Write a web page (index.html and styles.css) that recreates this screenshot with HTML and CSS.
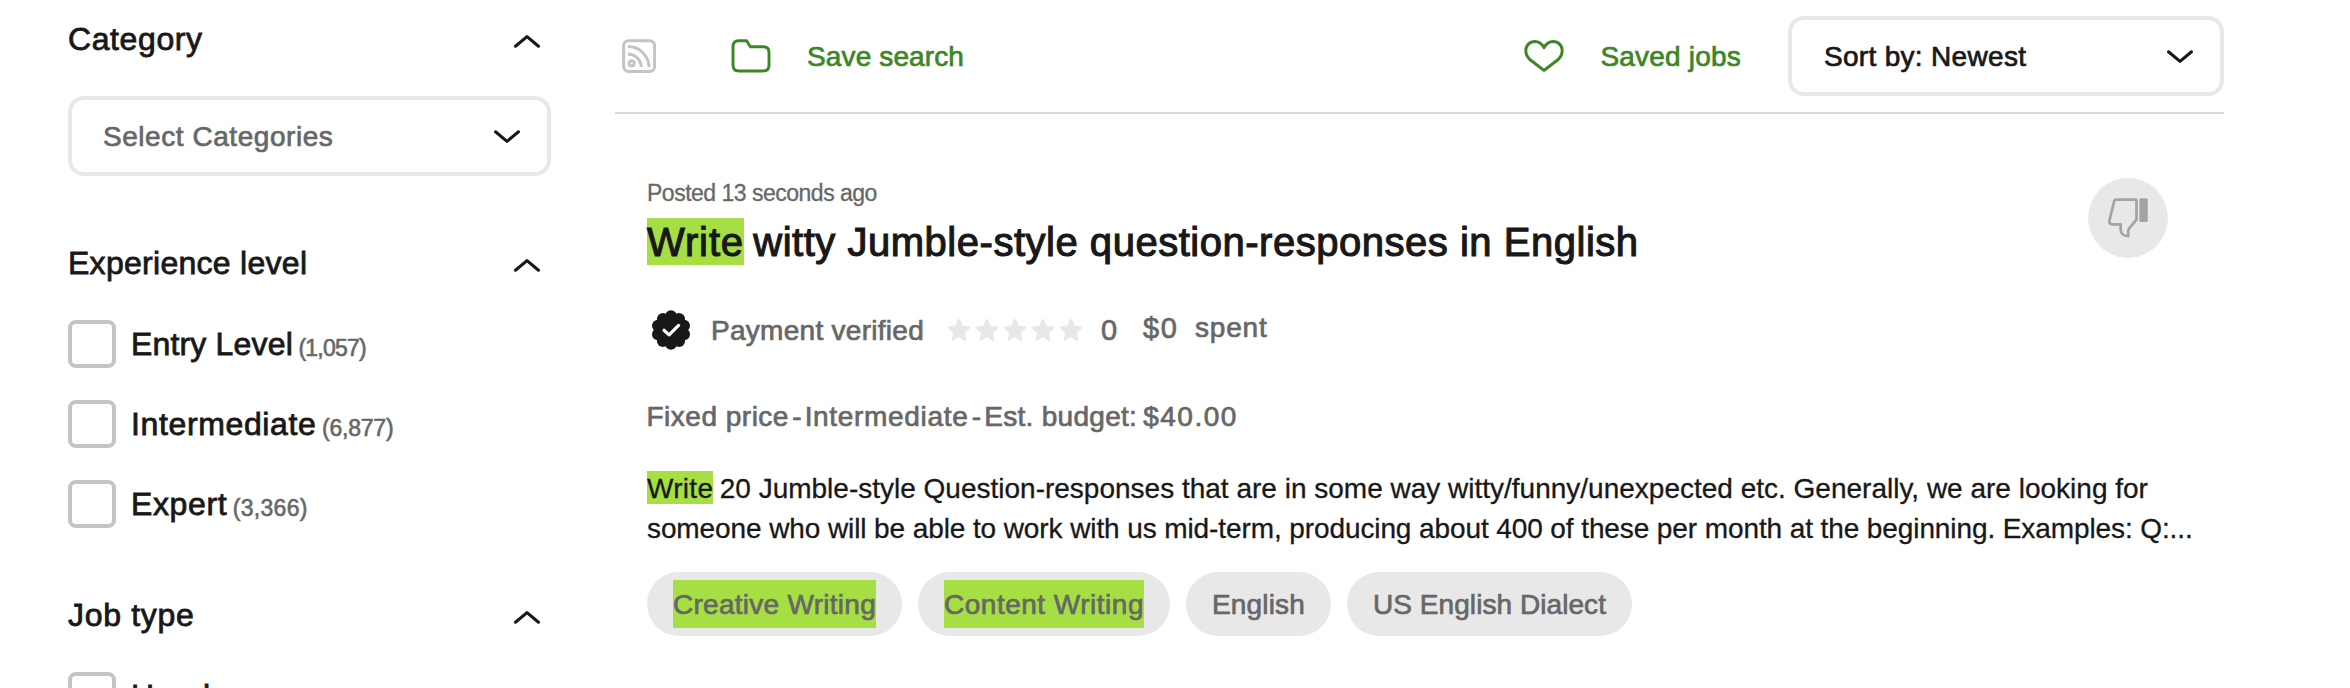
FILE: index.html
```
<!DOCTYPE html>
<html lang="en">
<head>
<meta charset="utf-8">
<title>Job search</title>
<link rel="stylesheet" href="styles.css">
</head>
<body>
<svg class="defs" aria-hidden="true">
  <symbol id="chevron" viewBox="0 0 28 16"><path d="M2.5 2.8 14 12.4 25.5 2.8" fill="none" stroke="#181818" stroke-width="3.1" stroke-linecap="round" stroke-linejoin="round"/></symbol>
  <symbol id="star" viewBox="0 0 24 24"><path d="M12 1.8 15 8.6 22.4 9.4 16.9 14.4 18.4 22 12 18.2 5.6 22 7.1 14.4 1.6 9.4 9 8.6Z" fill="#e8e8e8" stroke="#e8e8e8" stroke-width="2" stroke-linejoin="round"/></symbol>
</svg>
<div class="page">
  <aside class="sidebar">
    <h2 class="heading"><span class="t-category">Category</span><svg class="chevron up"><use href="#chevron"/></svg></h2>
    <div class="select select-category"><span>Select Categories</span><svg class="chevron"><use href="#chevron"/></svg></div>

    <h2 class="heading heading-next"><span class="t-experience">Experience level</span><svg class="chevron up"><use href="#chevron"/></svg></h2>
    <ul class="options">
      <li class="option"><span class="checkbox"></span><span class="label t-entry">Entry Level</span><span class="count t-count-entry">(1,057)</span></li>
      <li class="option"><span class="checkbox"></span><span class="label">Intermediate</span><span class="count t-count-inter">(6,877)</span></li>
      <li class="option"><span class="checkbox"></span><span class="label">Expert</span><span class="count t-count-expert">(3,366)</span></li>
    </ul>

    <h2 class="heading heading-next"><span class="t-jobtype">Job type</span><svg class="chevron up"><use href="#chevron"/></svg></h2>
    <ul class="options">
      <li class="option"><span class="checkbox"></span><span class="label">Hourly</span></li>
    </ul>
  </aside>

  <main class="main">
    <div class="toolbar">
      <svg class="rss" width="34" height="34" viewBox="0 0 34 34" fill="none" stroke="#c4c4c4" stroke-width="3">
        <rect x="1.6" y="1.7" width="31" height="30.8" rx="5"/>
        <path d="M6 7.5A21 21 0 0 1 27 28M6 15.3A13 13 0 0 1 19.2 28"/>
        <circle cx="9.7" cy="24.3" r="2.6"/>
      </svg>
      <a class="link save">
        <svg width="40" height="34" viewBox="0 0 40 34" fill="none" stroke="#3c8625" stroke-width="2.9" stroke-linejoin="round">
          <path d="M7.5 1.8H15.6L19.3 7.7H32.3Q38 7.7 38 13.3V26.2Q38 32 32 32H8Q2 32 2 26V8Q2 1.8 7.5 1.8Z"/>
        </svg>
        <span class="t-save">Save search</span>
      </a>
      <a class="link saved">
        <svg width="40" height="34" viewBox="0 0 40 34" fill="none" stroke="#3c8625" stroke-width="3" stroke-linejoin="round">
          <path d="M20 8.6C17.6 4.3 14.4 2.5 10.9 2.5C5.6 2.5 1.8 6.5 1.8 11.8C1.8 15.6 3.4 18.2 5.8 20.5L20 31.4L34.2 20.5C36.6 18.2 38.2 15.6 38.2 11.8C38.2 6.5 34.4 2.5 29.1 2.5C25.6 2.5 22.4 4.3 20 8.6Z"/>
        </svg>
        <span class="t-saved">Saved jobs</span>
      </a>
      <div class="select select-sort"><span>Sort by: Newest</span><svg class="chevron"><use href="#chevron"/></svg></div>
    </div>

    <article class="job">
      <header class="job-head">
        <div>
          <div class="posted">Posted 13 seconds ago</div>
          <h1 class="title"><mark>Write</mark> witty Jumble-style question-responses in English</h1>
        </div>
        <button class="dislike" aria-label="Not interested">
          <svg width="40" height="40" viewBox="0 0 40 40" fill="none" stroke="#a3a3a3" stroke-width="2.7" stroke-linejoin="round">
            <path d="M8 1.6H27.5Q28.5 1.6 28.5 2.6V21.6L21 30.5Q20.2 31.5 20.2 33V38.1C15.8 38.1 12.7 35.6 12.7 31.5V26.3H4.2Q.9 26.2 1.4 22.8L6.2 3Q6.6 1.6 8 1.6Z"/>
            <rect x="31.4" y=".2" width="8.4" height="23.8" rx="1.5" fill="#a3a3a3" stroke="none"/>
          </svg>
        </button>
      </header>

      <div class="client">
        <svg class="badge" width="40" height="40" viewBox="-20 -20 40 40">
          <g fill="#181818">
            <circle r="16.8"/>
            <circle cx="0" cy="-13.7" r="6"/><circle cx="8.05" cy="-11.1" r="6"/><circle cx="13" cy="-4.25" r="6"/>
            <circle cx="13" cy="4.25" r="6"/><circle cx="8.05" cy="11.1" r="6"/><circle cx="0" cy="13.7" r="6"/>
            <circle cx="-8.05" cy="11.1" r="6"/><circle cx="-13" cy="4.25" r="6"/><circle cx="-13" cy="-4.25" r="6"/>
            <circle cx="-8.05" cy="-11.1" r="6"/>
          </g>
          <path d="M-7 .3-1.9 4.9 7.6-4.6" fill="none" stroke="#fff" stroke-width="3.2" stroke-linecap="round" stroke-linejoin="round"/>
        </svg>
        <span class="verified">Payment verified</span>
        <span class="stars">
          <svg><use href="#star"/></svg><svg><use href="#star"/></svg><svg><use href="#star"/></svg><svg><use href="#star"/></svg><svg><use href="#star"/></svg>
        </span>
        <span class="rating">0</span>
        <span class="spent"><span class="amount">$0</span><span class="spent-label">spent</span></span>
      </div>

      <div class="terms"><span class="t-fixed">Fixed price</span><span class="dash">-</span><span class="t-level">Intermediate</span><span class="dash">-</span><span class="t-est">Est. budget:</span><span class="t-budget">$40.00</span></div>

      <p class="description"><mark>Write</mark> 20 Jumble-style Question-responses that are in some way witty/funny/unexpected etc. Generally, we are looking for<br><span class="t-second">someone who will be able to work with us mid-term, producing about 400 of these per month at the beginning. Examples: Q:...</span></p>

      <div class="tags">
        <span class="tag t-creative"><mark>Creative Writing</mark></span>
        <span class="tag t-content"><mark>Content Writing</mark></span>
        <span class="tag t-english">English</span>
        <span class="tag t-dialect">US English Dialect</span>
      </div>
    </article>
  </main>
</div>
</body>
</html>
```
FILE: styles.css
```
* { box-sizing: border-box; }
html, body { margin: 0; overflow: hidden; }
body {
  background: #fff;
  color: #181818;
  font-family: "Liberation Sans", Arial, sans-serif;
  font-size: 28px;
  line-height: 40px;
}
svg { display: block; flex: none; }
h1, h2, p, ul { margin: 0; padding: 0; font-weight: 400; list-style: none; }
mark { background: #a5df43; color: inherit; }
span { white-space: nowrap; }
.defs { display: none; }

.page { display: flex; width: 2350px; height: 688px; overflow: hidden; }

/* Filters */
.sidebar { flex: none; width: 615px; padding: 15px 0 0 68px; }
.heading {
  display: flex; justify-content: space-between; align-items: center;
  width: 483px; height: 48px; padding-right: 10px;
  font-size: 32px; line-height: 48px;
  -webkit-text-stroke: .8px;
}
.heading-next { margin-top: 63px; }
.chevron { width: 28px; height: 16px; }
.chevron.up { margin-top: 4px; transform: scaleY(-1); }

.select {
  display: flex; justify-content: space-between; align-items: center;
  height: 80px; padding: 0 26px 0 31px;
  border: 4px solid #e8e8e8; border-radius: 16px;
  -webkit-text-stroke: .7px;
}
.select span { padding-top: 1px; }
.select .chevron { margin-top: 2px; }
.select-category { width: 483px; margin-top: 33px; color: #676767; letter-spacing: .55px; }
.select-sort { width: 436px; padding: 0 26px 0 32px; margin-left: 47px; letter-spacing: .31px; }

.options { display: grid; gap: 32px; margin-top: 33px; }
.option { display: flex; align-items: center; height: 48px; line-height: 48px; }
.checkbox { flex: none; width: 48px; height: 48px; margin-right: 15px; border: 4px solid #c4c4c4; border-radius: 8px; }
.label { font-size: 32px; letter-spacing: .63px; -webkit-text-stroke: .8px; }
.count { margin: 7px 0 0 5.5px; font-size: 23px; color: #676767; -webkit-text-stroke: .6px; }

/* Results toolbar */
.main { flex: none; width: 1609px; }
.toolbar { display: flex; align-items: center; height: 114px; padding-left: 7px; border-bottom: 2px solid #d9d9d9; }
.link { display: flex; align-items: center; gap: 36px; color: #3c8625; -webkit-text-stroke: .7px; }
.link span { padding-top: 1px; }
.save { margin-left: 75px; }
.saved { margin-left: auto; }

/* Job card */
.job { padding: 63px 0 0 32px; }
.job-head { display: flex; justify-content: space-between; align-items: flex-start; padding-right: 56px; }
.posted { font-size: 23px; line-height: 32px; letter-spacing: -.5px; color: #676767; -webkit-text-stroke: .3px; }
.title { margin-top: 5px; font-size: 40px; line-height: 56px; letter-spacing: .52px; -webkit-text-stroke: 1.1px; white-space: nowrap; }
.title mark { padding: 2px 0 1px; margin-right: -2.4px; letter-spacing: .88px; }
.dislike {
  display: grid; place-items: center; flex: none;
  width: 80px; height: 80px; margin-top: 1px; padding: 0;
  border: 0; border-radius: 50%; background: #e8e8e8;
}

.client { display: flex; align-items: center; height: 40px; margin: 40px 0 0 4px; color: #676767; -webkit-text-stroke: .7px; }
.verified { width: 214px; margin: 0 22px 0 20px; padding-top: 1px; letter-spacing: .28px; }
.stars { display: flex; gap: 4px; }
.stars svg { width: 24px; height: 24px; }
.rating { width: 42px; margin-left: 18px; font-size: 29px; }
.spent { display: flex; padding-bottom: 5px; }
.amount { width: 52px; font-size: 29px; letter-spacing: 1.5px; }
.spent-label { letter-spacing: .8px; }

.terms { display: flex; margin: 47px 0 0 -.5px; color: #676767; -webkit-text-stroke: .7px; }
.dash { margin: 0 3.2px; }

.description { margin-top: 32px; -webkit-text-stroke: .3px; white-space: nowrap; }
.description mark { padding: 2px 0 0; margin-right: -1.4px; letter-spacing: .3px; }

.tags { display: flex; gap: 16px; margin-top: 23px; }
.tag {
  display: flex; align-items: center; justify-content: center;
  height: 64px; padding-top: 1px; border-radius: 32px; background: #e8e8e8;
  color: #676767; line-height: 48px; -webkit-text-stroke: .7px;
}
.tag mark { height: 48px; margin-top: -1px; padding-top: 1px; }

/* Tracking per label */
.t-category { letter-spacing: .6px; }
.t-experience { letter-spacing: .28px; }
.t-jobtype { letter-spacing: .7px; }
.t-entry { letter-spacing: .17px; }
.t-count-entry { letter-spacing: -.77px; }
.t-count-inter { letter-spacing: -.2px; }
.t-count-expert { letter-spacing: .3px; }
.t-save { letter-spacing: .13px; }
.t-saved { letter-spacing: .2px; }
.t-fixed { letter-spacing: .5px; }
.t-level { letter-spacing: .68px; }
.t-est { letter-spacing: .3px; }
.t-budget { margin-left: 6px; letter-spacing: 1.5px; }
.t-second { letter-spacing: -.1px; }
.t-creative { width: 255px; letter-spacing: .27px; }
.t-content { width: 252px; letter-spacing: .5px; }
.t-english { width: 145px; letter-spacing: .17px; }
.t-dialect { width: 285px; letter-spacing: .06px; }
```
